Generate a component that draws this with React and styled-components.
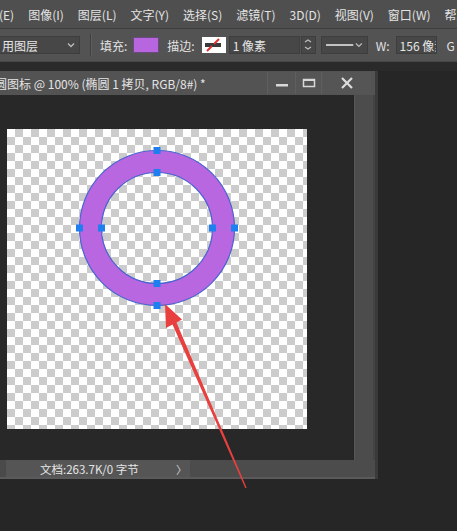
import React from "react";
import styled, { createGlobalStyle } from "styled-components";

const Global = createGlobalStyle`
  html, body { margin: 0; padding: 0; background: #262626; }
  body { width: 457px; height: 531px; overflow: hidden; font-family: "Noto Sans CJK SC", "Noto Sans", sans-serif; }
  * { box-sizing: border-box; }
`;

const Root = styled.div`
  position: relative;
  width: 457px;
  height: 531px;
  background: #262626;
  display: flex;
  flex-direction: column;
  overflow: hidden;
  color: #e2e2e2;
  font-size: 12px;
`;

const MenuBar = styled.div`
  height: 29px;
  background: #4f4f4f;
  display: flex;
  align-items: center;
  gap: 14px;
  border-bottom: 1px solid #3d3d3d;
  white-space: nowrap;
  overflow: hidden;
`;

const MenuItem = styled.span`
  font-size: 12px;
  color: #e4e4e4;
  margin-left: ${(p) => p.$ml || 0}px;
`;

const OptionsBar = styled.div`
  height: 33px;
  background: #535353;
  display: flex;
  align-items: center;
  white-space: nowrap;
  border-bottom: 1px solid #474747;
  overflow: hidden;
`;

const Box = styled.div`
  height: 18px;
  width: ${(p) => p.$w}px;
  margin-left: ${(p) => p.$ml || 0}px;
  background: #474747;
  border: 1px solid #3e3e3e;
  display: flex;
  align-items: center;
  justify-content: ${(p) => (p.$center ? "center" : "space-between")};
  padding: ${(p) => (p.$center ? "0" : "0 3px")};
  font-size: 12px;
  color: #e6e6e6;
  flex-shrink: 0;
  overflow: hidden;
  white-space: nowrap;
`;

const Sep = styled.div`
  width: 1px;
  height: 22px;
  background: #3f3f3f;
  margin-left: ${(p) => p.$ml || 0}px;
  box-shadow: 1px 0 0 #5e5e5e;
`;

const Label = styled.span`
  font-size: 12px;
  color: #e2e2e2;
  margin-left: ${(p) => p.$ml || 0}px;
  flex-shrink: 0;
`;

const Swatch = styled.div`
  width: 26px;
  height: 16px;
  margin-left: ${(p) => p.$ml || 0}px;
  background: #b866e0;
  border: 1px solid #6b4a7c;
  flex-shrink: 0;
`;

const StrokeSwatch = styled.div`
  width: 24px;
  height: 16px;
  margin-left: ${(p) => p.$ml || 0}px;
  background: #ffffff;
  flex-shrink: 0;
  display: flex;
`;

const Gap = styled.div`
  height: 9px;
  background: #2a2a2a;
`;

const Workspace = styled.div`
  flex: 1;
  display: flex;
`;

const DocWindow = styled.div`
  width: 378px;
  height: 408px;
  display: flex;
  flex-direction: column;
  background: #3c3c3c;
  border-right: 3px solid #3a3a3a;
`;

const TitleBar = styled.div`
  height: 24px;
  background: #535353;
  display: flex;
  align-items: center;
  white-space: nowrap;
  overflow: hidden;
  padding-right: 4px;
`;

const TitleText = styled.span`
  flex: 1;
  font-size: 12px;
  color: #e4e4e4;
  margin-left: -5px;
`;

const WinBtn = styled.div`
  width: ${(p) => p.$w}px;
  height: 22px;
  display: flex;
  align-items: center;
  justify-content: center;
  border-left: 1px solid #5f5f5f;
  background: #555555;
`;

const Body = styled.div`
  height: 365px;
  display: flex;
`;

const CanvasArea = styled.div`
  width: 354px;
  background: #282828;
  padding: 34px 0 0 7px;
  border-right: 1px solid #242424;
`;

const Canvas = styled.div`
  position: relative;
  width: 300px;
  height: 300px;
  background: repeating-conic-gradient(#cccccc 0 25%, #ffffff 0 50%) 0 0 / 16px 16px;
`;

const VScroll = styled.div`
  flex: 1;
  background: #4c4c4c;
  border-left: 1px solid #575757;
  border-right: 2px solid #444;
`;

const StatusBar = styled.div`
  height: 19px;
  display: flex;
  border-bottom: 2px solid #5a5a5a;
`;

const StatusInfo = styled.div`
  width: 190px;
  background: #555555;
  border-left: 6px solid #4a4a4a;
  display: flex;
  align-items: center;
  padding-left: 34px;
  font-size: 11.5px;
  color: #e6e6e6;
`;

const Chev = styled.span`
  margin-left: auto;
  margin-right: 3px;
  color: #d0d0d0;
  font-size: 11px;
`;

const StatusRest = styled.div`
  flex: 1;
  background: #4c4c4c;
`;

const Dark = styled.div`
  flex: 1;
  background: #262626;
`;

const Overlay = styled.svg`
  position: absolute;
  left: 0;
  top: 0;
  pointer-events: none;
`;

const RingSvg = styled.svg`
  position: absolute;
  left: 0;
  top: 0;
`;

const Chevron = ({ double }) => (
  <svg width="10" height="12" viewBox="0 0 10 12">
    {double ? (
      <>
        <path d="M2 3 L5 1 L8 3" fill="none" stroke="#bdbdbd" strokeWidth="1.2" />
        <path d="M2 8 L5 10 L8 8" fill="none" stroke="#bdbdbd" strokeWidth="1.2" />
      </>
    ) : (
      <path d="M2 4.5 L5 7.5 L8 4.5" fill="none" stroke="#bdbdbd" strokeWidth="1.3" />
    )}
  </svg>
);

const handles = [
  [150, 21.5], [150, 176.5], [72.5, 99], [227.5, 99],
  [150, 43.5], [150, 154.5], [94.5, 99], [205.5, 99],
];

export default function App() {
  return (
    <Root>
      <Global />
      <MenuBar>
        <MenuItem $ml={-1}>(E)</MenuItem>
        <MenuItem>图像(I)</MenuItem>
        <MenuItem>图层(L)</MenuItem>
        <MenuItem>文字(Y)</MenuItem>
        <MenuItem>选择(S)</MenuItem>
        <MenuItem>滤镜(T)</MenuItem>
        <MenuItem>3D(D)</MenuItem>
        <MenuItem>视图(V)</MenuItem>
        <MenuItem>窗口(W)</MenuItem>
        <MenuItem>帮助(H)</MenuItem>
      </MenuBar>
      <OptionsBar>
        <Box $w={82} $ml={-2}>
          <span>用图层</span>
          <Chevron />
        </Box>
        <Sep $ml={10} />
        <Label $ml={9}>填充:</Label>
        <Swatch $ml={6} />
        <Label $ml={8}>描边:</Label>
        <StrokeSwatch $ml={7}>
          <svg width="24" height="16" viewBox="0 0 24 16">
            <rect x="3" y="6" width="16" height="4" fill="#3a3a3a" />
            <line x1="17" y1="2" x2="12" y2="7" stroke="#e03030" strokeWidth="2" />
            <line x1="10" y1="9" x2="5" y2="14" stroke="#e03030" strokeWidth="2" />
          </svg>
        </StrokeSwatch>
        <Box $w={71} $ml={3}>
          <span>1 像素</span>
        </Box>
        <Box $w={15} $ml={1} $center>
          <Chevron double />
        </Box>
        <Box $w={47} $ml={5}>
          <svg width="30" height="4" viewBox="0 0 30 4">
            <line x1="1" y1="2" x2="29" y2="2" stroke="#f0f0f0" strokeWidth="1.5" />
          </svg>
          <Chevron />
        </Box>
        <Label $ml={8}>W:</Label>
        <Box $w={41} $ml={6}>
          <span>156 像素</span>
        </Box>
        <Label $ml={10}>G</Label>
      </OptionsBar>
      <Gap />
      <Workspace>
        <DocWindow>
          <TitleBar>
            <TitleText>圆图标 @ 100% (椭圆 1 拷贝, RGB/8#) *</TitleText>
            <WinBtn $w={28}>
              <svg width="14" height="10" viewBox="0 0 14 10">
                <rect x="1" y="6" width="12" height="2.5" fill="#d8d8d8" />
              </svg>
            </WinBtn>
            <WinBtn $w={26}>
              <svg width="14" height="10" viewBox="0 0 14 10">
                <rect x="1.5" y="1.5" width="11" height="7" fill="none" stroke="#d8d8d8" strokeWidth="1.5" />
                <rect x="1" y="1" width="12" height="2" fill="#d8d8d8" />
              </svg>
            </WinBtn>
            <WinBtn $w={50}>
              <svg width="14" height="12" viewBox="0 0 14 12">
                <path d="M2 1 L12 11 M12 1 L2 11" stroke="#dcdcdc" strokeWidth="2.2" />
              </svg>
            </WinBtn>
          </TitleBar>
          <Body>
            <CanvasArea>
              <Canvas>
                <RingSvg width="300" height="300" viewBox="0 0 300 300">
                  <path
                    d="M150 21.5 a77.5 77.5 0 1 0 0.01 0 Z M150 43.5 a55.5 55.5 0 1 1 -0.01 0 Z"
                    fill="#b967e0"
                    fillRule="evenodd"
                  />
                  <circle cx="150" cy="99" r="77.5" fill="none" stroke="#4a64d0" strokeWidth="1.2" />
                  <circle cx="150" cy="99" r="55.5" fill="none" stroke="#4a64d0" strokeWidth="1.2" />
                  {handles.map(([x, y], i) => (
                    <rect key={i} x={x - 3.5} y={y - 3.5} width="7" height="7" fill="#1f7ef0" />
                  ))}
                </RingSvg>
              </Canvas>
            </CanvasArea>
            <VScroll />
          </Body>
          <StatusBar>
            <StatusInfo>
              文档:263.7K/0 字节
              <Chev>〉</Chev>
            </StatusInfo>
            <StatusRest />
          </StatusBar>
        </DocWindow>
        <Dark />
      </Workspace>
      <Overlay width="457" height="531" viewBox="0 0 457 531">
        <polygon
          points="165,304 166,328 172.5,324.5 245.4,488.2 246.6,487.8 176.5,322.5 182,319.5"
          fill="#e8403f"
        />
      </Overlay>
    </Root>
  );
}
